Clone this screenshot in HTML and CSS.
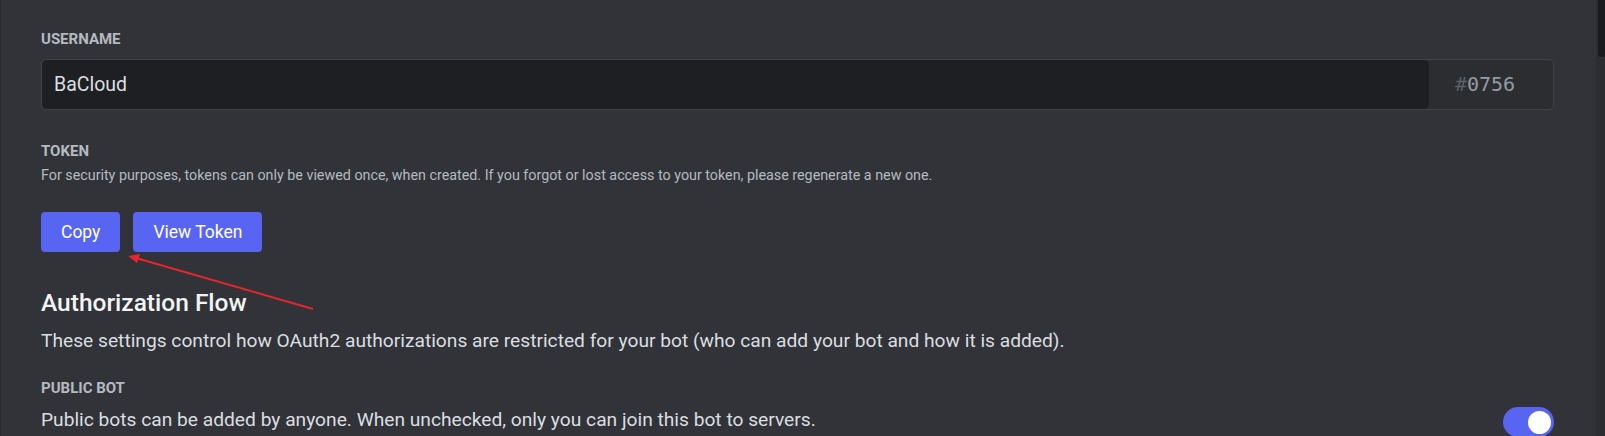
FILE: index.html
```
<!DOCTYPE html>
<html>
<head>
    <meta charset="utf-8">
    <title>Bot</title>
    <link rel="stylesheet" href="styles.css">
</head>
<body>
<div class="page">
    <div class="content">
        <!--用户名-->
        <h5 class="label">USERNAME</h5>
        <div class="name-field">
            <div class="name-input">BaCloud</div>
            <div class="discrim"><span class="hash">#</span>0756</div>
        </div>

        <!--token-->
        <h5 class="label label-token">TOKEN</h5>
        <p class="hint">For security purposes, tokens can only be viewed once, when created. If you forgot or lost access to your token, please regenerate a new one.</p>
        <div class="buttons">
            <button class="btn">Copy</button>
            <button class="btn">View Token</button>
        </div>

        <!--授权-->
        <h2 class="title">Authorization Flow</h2>
        <p class="text">These settings control how OAuth2 authorizations are restricted for your bot (who can add your bot and how it is added).</p>

        <h5 class="label label-bot">PUBLIC BOT</h5>
        <div class="row">
            <p class="text">Public bots can be added by anyone. When unchecked, only you can join this bot to servers.</p>
            <div class="toggle"><span class="knob"></span></div>
        </div>
    </div>
    <div class="scrollbar"><div class="thumb"></div></div>

    <svg class="arrow" width="400" height="330" viewBox="0 0 400 330">
        <line x1="313" y1="309" x2="136" y2="258" stroke="#e5262b" stroke-width="2" />
        <polygon points="128,256 140,254 137,263" fill="#e5262b" />
    </svg>
</div>
</body>
</html>
```

FILE: styles.css
```
*{ margin:0; padding:0; box-sizing:border-box;}
body{
    background:#313338;
    font-family:Roboto,"Noto Sans",sans-serif;
    overflow:hidden;
}
.page{
    display:flex;
    height:436px;
    position:relative;
}
.content{
    flex:1;
    padding:29px 42px 0 40px;
    border-left:1px solid #2b2d31;
}
.label{
    font-size:15px;
    line-height:20px;
    font-weight:700;
    color:#b5bac1;
    margin-bottom:10px;
}
.name-field{
    display:flex;
    height:51px;
    border:1px solid #3f4147;
    border-radius:5px;
    background:#2b2d31;
}
.name-input{
    flex:1;
    background:#1e1f22;
    border-radius:5px;
    font-size:19.5px;
    line-height:49px;
    color:#dbdee1;
    padding-left:12px;
}
.discrim{
    width:124px;
    text-align:center;
    font-family:"DejaVu Sans Mono",monospace;
    font-size:20px;
    line-height:49px;
    color:#949ba4;
    padding-right:12px;
}
.hash{
    color:#5c5f66;
}
.label-token{
    margin-top:31px;
    margin-bottom:4px;
}
.hint{
    font-size:14.3px;
    line-height:20px;
    color:#b5bac1;
}
.buttons{
    display:flex;
    gap:13px;
    margin-top:27px;
}
.btn{
    height:40px;
    padding:0 20px;
    border:none;
    border-radius:4px;
    background:#5865f2;
    color:#fff;
    font-family:inherit;
    font-size:17.5px;
}
.title{
    margin-top:36px;
    font-size:24.5px;
    line-height:30px;
    font-weight:500;
    color:#f2f3f5;
}
.text{
    margin-top:10px;
    font-size:19.2px;
    line-height:25px;
    color:#dbdee1;
}
.label-bot{
    margin-top:25px;
    margin-bottom:0;
}
.row{
    display:flex;
    justify-content:space-between;
    align-items:flex-start;
}
.row .text{
    margin-top:9px;
}
.toggle{
    width:51px;
    height:30px;
    margin-top:9px;
    border-radius:15px;
    background:#5865f2;
    position:relative;
}
.knob{
    position:absolute;
    right:3px;
    top:4px;
    width:23px;
    height:23px;
    border-radius:50%;
    background:#fff;
}
.scrollbar{
    width:9px;
    background:#2b2d31;
}
.thumb{
    margin-left:2px;
    height:57px;
    background:#1a1b1e;
    border-radius:0 0 3px 3px;
}
.arrow{
    position:absolute;
    left:0;
    top:0;
}
```
